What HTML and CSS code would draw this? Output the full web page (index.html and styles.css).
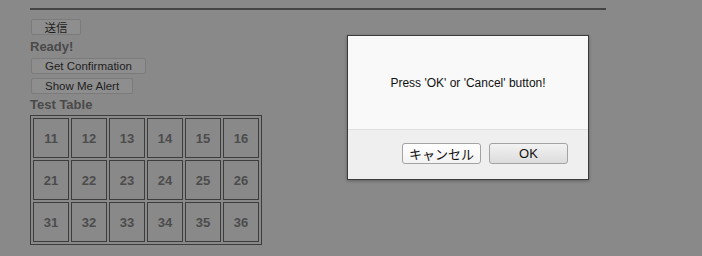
FILE: index.html
```html
<!DOCTYPE html>
<html lang="ja">
<head>
    <meta charset="UTF-8">
    <title>Test Page</title>
    <link rel="stylesheet" href="styles.css">
</head>
<body>

    <hr class="rule">

    <button class="btn btn-send">送信</button>
    <div class="status">Ready!</div>
    <button class="btn btn-confirm">Get Confirmation</button>
    <button class="btn btn-alert">Show Me Alert</button>

    <div class="title">Test Table</div>
    <table class="grid">
        <tr><td>11</td><td>12</td><td>13</td><td>14</td><td>15</td><td>16</td></tr>
        <tr><td>21</td><td>22</td><td>23</td><td>24</td><td>25</td><td>26</td></tr>
        <tr><td>31</td><td>32</td><td>33</td><td>34</td><td>35</td><td>36</td></tr>
    </table>

    <div class="dialog">
        <div class="dialog-body">Press 'OK' or 'Cancel' button!</div>
        <div class="dialog-foot">
            <button class="dlg-btn dlg-cancel">キャンセル</button>
            <button class="dlg-btn dlg-ok">OK</button>
        </div>
    </div>

</body>
</html>
```

FILE: styles.css
```css
body {
    margin: 0;
    padding: 8px 0 0 30px;
    background: #898989;
    font-family: "Liberation Sans", Arial, "Noto Sans CJK JP", sans-serif;
    color: #4a4a4a;
}
.rule {
    width: 576px;
    margin: 0;
    border: none;
    border-top: 2px solid #444;
}
.btn {
    display: block;
    height: 16px;
    margin: 0 0 0 1px;
    padding: 0 13px;
    background: #8e8e8e;
    border: 1px solid #7b7b7b;
    border-radius: 2px;
    font-family: "Liberation Sans", Arial, "Noto Sans CJK JP", sans-serif;
    font-size: 11.5px;
    line-height: 14px;
    color: #1e1e1e;
}
.btn-send {
    margin-top: 9px;
    width: 50px;
    padding: 0;
    font-family: "Noto Sans CJK JP", sans-serif;
}
.btn-confirm {
    margin-top: 3px;
}
.btn-alert {
    margin-top: 4px;
}
.status, .title {
    font-size: 13px;
    font-weight: bold;
    line-height: 16px;
    margin-top: 4px;
    color: #4a4a4a;
}
.title {
    margin-top: 3px;
}
.grid {
    margin-top: 2px;
    border: 1px solid #3c3c3c;
    border-spacing: 2px;
}
.grid td {
    width: 34px;
    height: 38px;
    padding: 0;
    border: 1px solid #3c3c3c;
    text-align: center;
    font-size: 13px;
    font-weight: bold;
    color: #4c4c4c;
}
.dialog {
    position: absolute;
    left: 347px;
    top: 35px;
    width: 240px;
    border: 1px solid #3a3a3a;
    background: #f9f9f9;
    box-shadow: 0 1px 3px rgba(0, 0, 0, 0.3);
}
.dialog-body {
    padding: 40px 0 39px;
    font-size: 12px;
    line-height: 14px;
    text-align: center;
    color: #111;
}
.dialog-foot {
    display: flex;
    justify-content: flex-end;
    gap: 8px;
    padding: 13px 20px 15px;
    background: #efefef;
    border-top: 1px solid #dedede;
}
.dlg-btn {
    width: 79px;
    height: 21px;
    padding: 0;
    border: 1px solid #a3a3a3;
    border-radius: 3px;
    font-family: "Liberation Sans", Arial, "Noto Sans CJK JP", sans-serif;
    font-size: 13px;
    color: #111;
}
.dlg-cancel {
    background: linear-gradient(#ffffff, #f3f3f3);
    font-family: "Noto Sans CJK JP", sans-serif;
}
.dlg-ok {
    background: linear-gradient(#f2f2f2, #dcdcdc);
}
```
